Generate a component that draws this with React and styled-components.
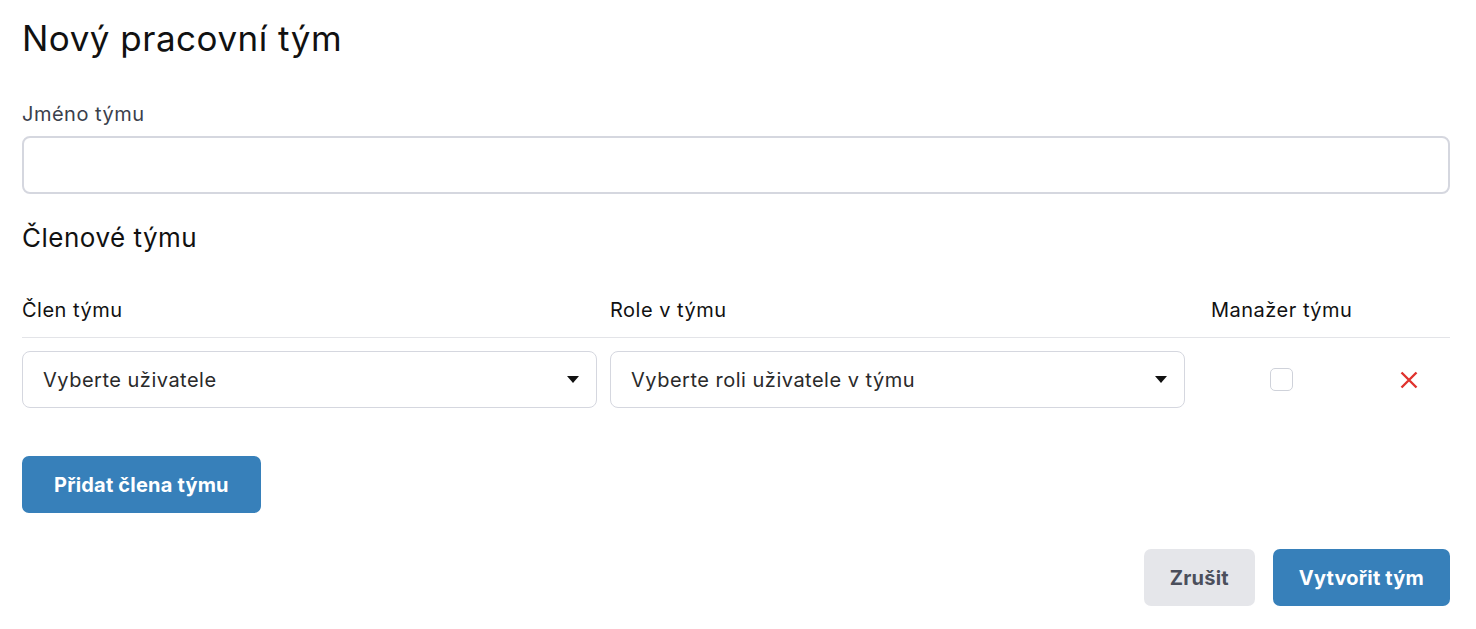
import React, { useState } from 'react';
import styled, { createGlobalStyle } from 'styled-components';

const GlobalStyle = createGlobalStyle`
  html, body {
    margin: 0;
    padding: 0;
    background: #fff;
  }
  body {
    font-family: Inter, "Noto Sans", sans-serif;
    letter-spacing: 0.5px;
    color: #111;
  }
  * {
    box-sizing: border-box;
  }
`;

const App = () => {
  const [members, setMembers] = useState([{ id: 1, manager: false }]);

  const toggleManager = (id) => {
    setMembers(prev => prev.map(m => (m.id === id ? { ...m, manager: !m.manager } : m)));
  };

  const removeMember = (id) => {
    setMembers(prev => prev.filter(m => m.id !== id));
  };

  const addMember = () => {
    setMembers(prev => [...prev, { id: Date.now(), manager: false }]);
  };

  return (
    <>
      <GlobalStyle />
      <Page>
        <Title>Nový pracovní tým</Title>

        <Field>
          <Label htmlFor="team-name">Jméno týmu</Label>
          <TextInput id="team-name" type="text" />
        </Field>

        <SectionTitle>Členové týmu</SectionTitle>

        <MembersGrid>
          <HeadCell>Člen týmu</HeadCell>
          <HeadCell>Role v týmu</HeadCell>
          <HeadCell $inset>Manažer týmu</HeadCell>
          <HeadCell />
          <HeadRule />

          {members.map(member => (
            <React.Fragment key={member.id}>
              <SelectBox>
                <span>Vyberte uživatele</span>
                <Caret />
              </SelectBox>
              <SelectBox>
                <span>Vyberte roli uživatele v týmu</span>
                <Caret />
              </SelectBox>
              <CheckCell>
                <Checkbox
                  type="checkbox"
                  checked={member.manager}
                  onChange={() => toggleManager(member.id)}
                />
              </CheckCell>
              <ActionCell>
                <RemoveButton type="button" onClick={() => removeMember(member.id)} aria-label="Odebrat">
                  <svg width="18" height="18" viewBox="0 0 18 18">
                    <path d="M1.5 1.5 L16.5 16.5 M16.5 1.5 L1.5 16.5" stroke="#e0332e" strokeWidth="2.4" />
                  </svg>
                </RemoveButton>
              </ActionCell>
            </React.Fragment>
          ))}
        </MembersGrid>

        <AddRow>
          <AddButton $variant="primary" type="button" onClick={addMember}>Přidat člena týmu</AddButton>
        </AddRow>

        <Footer>
          <Button $variant="secondary" type="button">Zrušit</Button>
          <Button $variant="primary" type="button">Vytvořit tým</Button>
        </Footer>
      </Page>
    </>
  );
};

// Styled Components

const Page = styled.div`
  padding: 17px 26px 20px 22px;
`;

const Title = styled.h1`
  margin: 0;
  font-size: 35px;
  line-height: 42px;
  font-weight: 400;
  color: #111;
`;

const Field = styled.div`
  margin-top: 43px;
  display: flex;
  flex-direction: column;
  gap: 10px;
`;

const Label = styled.label`
  font-size: 20px;
  line-height: 24px;
  color: #3b3f4c;
`;

const TextInput = styled.input`
  height: 58px;
  width: 100%;
  border: 2px solid #d5d7df;
  border-radius: 8px;
  padding: 0 18px;
  font: inherit;
  font-size: 20px;
  outline: none;
`;

const SectionTitle = styled.h2`
  margin: 28px 0 0;
  font-size: 26px;
  line-height: 32px;
  font-weight: 400;
  color: #111;
`;

const MembersGrid = styled.div`
  margin-top: 44px;
  display: grid;
  grid-template-columns: 575px 575px 167px 1fr;
  column-gap: 13px;
  align-items: center;
`;

const HeadCell = styled.div`
  font-size: 20px;
  line-height: 24px;
  color: #111;
  padding-left: ${({ $inset }) => ($inset ? '13px' : '0')};
  padding-bottom: 15px;
`;

const HeadRule = styled.div`
  grid-column: 1 / -1;
  height: 1px;
  background: #e3e4e8;
  margin-bottom: 13px;
`;

const SelectBox = styled.div`
  height: 57px;
  border: 1px solid #d5d7df;
  border-radius: 8px;
  padding: 0 17px 0 20px;
  display: flex;
  align-items: center;
  justify-content: space-between;
  font-size: 20px;
  color: #2a2a2a;
  cursor: pointer;
`;

const Caret = styled.span`
  width: 0;
  height: 0;
  border-left: 6px solid transparent;
  border-right: 6px solid transparent;
  border-top: 7px solid #111;
`;

const CheckCell = styled.div`
  display: flex;
  justify-content: center;
  align-items: center;
`;

const ActionCell = styled.div`
  display: flex;
  align-items: center;
  padding-left: 22px;
`;

const Checkbox = styled.input`
  appearance: none;
  width: 23px;
  height: 23px;
  margin: 0;
  border: 1px solid #cfd2da;
  border-radius: 5px;
  background: #fff;
  cursor: pointer;

  &:checked {
    background: #3780ba;
    border-color: #3780ba;
  }
`;

const RemoveButton = styled.button`
  display: flex;
  background: none;
  border: none;
  padding: 0;
  cursor: pointer;
`;

const AddRow = styled.div`
  margin-top: 48px;
`;

const Button = styled.button`
  height: 57px;
  padding: 0 26px;
  border: none;
  border-radius: 7px;
  font-family: Inter, "Noto Sans", sans-serif;
  font-size: 20px;
  letter-spacing: 0.2px;
  font-weight: 700;
  cursor: pointer;
  background: ${({ $variant }) => ($variant === 'primary' ? '#3780ba' : '#e5e6ea')};
  color: ${({ $variant }) => ($variant === 'primary' ? '#fff' : '#4b4f5c')};
`;

const AddButton = styled(Button)`
  padding: 0 32px;
`;

const Footer = styled.div`
  margin-top: 36px;
  display: flex;
  justify-content: flex-end;
  gap: 18px;
`;

export default App;
